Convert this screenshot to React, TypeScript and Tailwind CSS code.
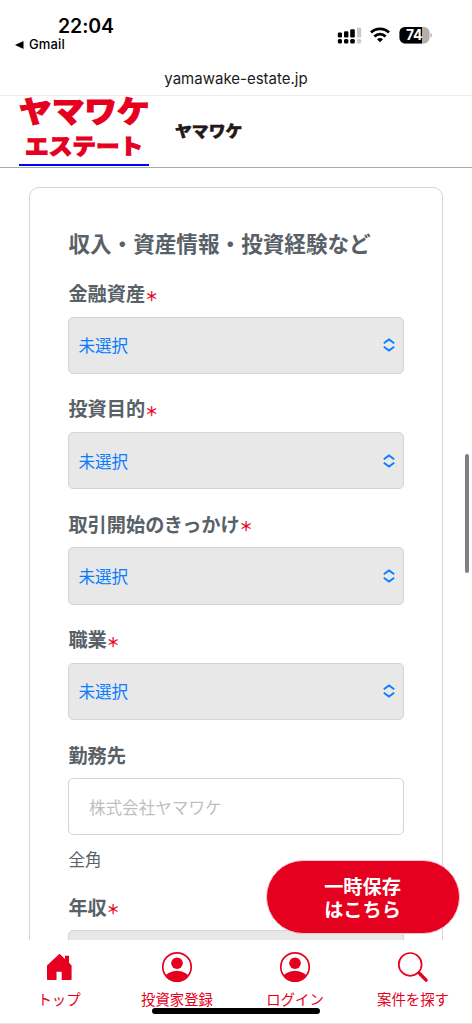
import React from "react";

function StatusBar() {
  return (
    <div className="flex h-[60px] shrink-0 justify-between">
      <div className="pl-[15px] pt-[14px] font-['Inter',sans-serif] text-black">
        <div className="w-[142px] text-center text-[19.5px] font-semibold leading-[24px] tracking-[-0.1px]">22:04</div>
        <div className="flex items-center gap-[5px] text-[13px] font-medium leading-[13px] tracking-[0.15px]">
          <svg width="9" height="8" viewBox="0 0 9 8"><path d="M0 4 8.5 0v8Z" fill="#000" /></svg>
          <span>Gmail</span>
        </div>
      </div>
      <div className="mt-[25px] flex h-[20px] items-center pr-[39px]">
        <svg width="25" height="18" viewBox="0 0 25 18">
          <g fill="#000">
            <rect x="0.8" y="6.5" width="4.2" height="5" rx="1.3" />
            <rect x="7" y="5.3" width="4.4" height="6.2" rx="1.3" />
            <rect x="13.2" y="3.2" width="4.6" height="8.3" rx="1.3" />
            <rect x="0.8" y="13" width="4.2" height="4.6" rx="1.5" />
            <rect x="7" y="13" width="4.4" height="4.6" rx="1.5" />
            <rect x="13.2" y="13" width="4.6" height="4.6" rx="1.5" />
          </g>
          <g fill="#cbcbcb">
            <rect x="20" y="1.5" width="4.2" height="10" rx="1.3" />
            <rect x="20" y="13" width="4.2" height="4.6" rx="1.5" />
          </g>
        </svg>
        <svg className="ml-[8px]" width="20" height="16" viewBox="0 0 20 16" fill="none" stroke="#000" strokeWidth="2.8">
          <path d="M1 5.6C6 .7 14 .7 19 5.6" />
          <path d="M4.4 9.4c3.2-3.1 8-3.1 11.2 0" />
          <path d="M7 12.3c1.8-1.7 4.2-1.7 6 0l-3 3Z" fill="#000" stroke="none" />
        </svg>
        <svg className="ml-[9px]" width="34" height="18" viewBox="0 0 34 18">
          <defs><clipPath id="level"><rect width="23" height="18" /></clipPath></defs>
          <rect x="0.5" y="1" width="30" height="16.4" rx="5.3" fill="#b0b0b0" />
          <rect x="0.5" y="1" width="30" height="16.4" rx="5.3" fill="#000" clipPath="url(#level)" />
          <path d="M31.4 7c2 .6 2 4 0 4.6Z" fill="#b0b0b0" />
          <text x="15" y="14.2" textAnchor="middle" fontSize="14" fontWeight="700" letterSpacing="-0.4" fill="#fff" className="font-['Inter',sans-serif]">74</text>
        </svg>
      </div>
    </div>
  );
}

function SiteHeader() {
  return (
    <header className="flex h-[72px] shrink-0 items-start border-b border-[#a9a9a9] bg-white pl-[19px] font-['Noto_Sans_CJK_JP',sans-serif]">
      <div className="h-[69.5px] w-[130px] border-b-[2.5px] border-[#0000ff]">
        <svg className="overflow-visible" width="130" height="67" viewBox="0 0 130 67" fill="#e60020" stroke="#e60020" strokeWidth="1" fontWeight="900">
          <text transform="translate(0 26.3) scale(1.09 1)" fontSize="30">ヤマワケ</text>
          <text transform="translate(6 57.5) scale(1.1 1)" fontSize="21.5">エステート</text>
        </svg>
      </div>
      <svg className="ml-[26px] mt-[24px] overflow-visible" width="70" height="24" viewBox="0 0 70 24" fill="#231815" stroke="#231815" strokeWidth="0.5" fontWeight="900">
        <text transform="translate(0 16.5) scale(1.08 1)" fontSize="15.6">ヤマワケ</text>
      </svg>
    </header>
  );
}

function Label({ text, required = true }: { text: string; required?: boolean }) {
  return (
    <div className="mb-[9.5px] flex h-[27px] items-center text-[19.2px] font-bold leading-[27px] text-[#596168]">
      <span>{text}</span>
      {required && (
        <span className="pt-[3px] text-[12.8px] font-normal text-[#e60020] [-webkit-text-stroke:0.35px_#e60020]">＊</span>
      )}
    </div>
  );
}

function SelectBox() {
  return (
    <div className="flex h-[57.4px] items-center justify-between rounded-[5px] border border-[#d4d4d4] bg-[#e8e8e8] pl-[9px] pr-[8px] text-[16.6px] text-[#0a7cff]">
      <span className="pt-[1px]">未選択</span>
      <svg width="12" height="14" viewBox="0 0 12 14" fill="none" stroke="#0a7cff" strokeWidth="1.8">
        <path d="M.8 5.2 6 1.4l5.2 3.8M.8 8.8 6 12.6l5.2-3.8" />
      </svg>
    </div>
  );
}

function SelectField({ label }: { label: string }) {
  return (
    <div className="mb-[21.5px]">
      <Label text={label} />
      <SelectBox />
    </div>
  );
}

function PersonIcon({ id }: { id: string }) {
  return (
    <svg width="32" height="32" viewBox="0 0 32 32">
      <defs><clipPath id={id}><circle cx="16" cy="16" r="14.5" /></clipPath></defs>
      <circle cx="16" cy="16" r="14.2" fill="none" stroke="#e60020" strokeWidth="1.7" />
      <circle cx="16" cy="12.2" r="5.8" fill="#e60020" />
      <ellipse cx="16" cy="28.5" rx="12.5" ry="8.7" fill="#e60020" clipPath={`url(#${id})`} />
    </svg>
  );
}

function HomeIcon() {
  return (
    <svg width="32" height="32" viewBox="0 0 32 32">
      <path d="M16.5 2.7 4 14.4V28.2q0 .8.8.8h8.7v-8.3h5.2V29h9.1q.8 0 .8-.8V14.4l-2.6-2.6V4.8h-4v3.2Z" fill="#e60020" />
    </svg>
  );
}

function SearchIcon() {
  return (
    <svg width="32" height="32" viewBox="0 0 32 32" fill="none" stroke="#e60020">
      <circle cx="13.2" cy="13.4" r="11.4" strokeWidth="1.7" />
      <path d="m21 21 2 2" strokeWidth="2" />
      <path d="m22.6 22.5 6.5 6.6" strokeWidth="3.4" strokeLinecap="round" />
    </svg>
  );
}

function BottomNav() {
  const items = [
    { label: "トップ", icon: <HomeIcon /> },
    { label: "投資家登録", icon: <PersonIcon id="register" /> },
    { label: "ログイン", icon: <PersonIcon id="login" /> },
    { label: "案件を探す", icon: <SearchIcon /> },
  ];
  return (
    <nav className="relative grid h-[84px] shrink-0 grid-cols-4 border-b border-[#e8e8e8] bg-white">
      {items.map((item) => (
        <div key={item.label} className="flex flex-col items-center pt-[11px] text-[14.4px] leading-[20px] text-[#e60020]">
          {item.icon}
          <span className="mt-[6px]">{item.label}</span>
        </div>
      ))}
      <div className="absolute bottom-[9px] left-[152px] h-[6px] w-[168px] rounded-full bg-black" />
    </nav>
  );
}

export default function App() {
  return (
    <div className="relative flex h-[1024px] w-[472px] flex-col overflow-hidden bg-white font-['Noto_Sans_CJK_JP',sans-serif]">
      <StatusBar />
      <div className="flex h-[36px] shrink-0 items-center justify-center border-b border-[#ebebeb] pt-[4px] font-['Inter',sans-serif] text-[15px] text-[#1a1a1a]">
        yamawake-estate.jp
      </div>
      <SiteHeader />
      <main className="h-[772px] shrink-0 overflow-hidden px-[29px] pt-[19px]">
        <section className="h-[900px] rounded-[10px] border border-[#d7d7d7] pl-[38.4px] pr-[38.4px] pt-[38.5px]">
          <h2 className="mb-[21.5px] text-[21.6px] font-bold leading-[32px] text-[#596168]">収入・資産情報・投資経験など</h2>
          <SelectField label="金融資産" />
          <SelectField label="投資目的" />
          <SelectField label="取引開始のきっかけ" />
          <SelectField label="職業" />
          <Label text="勤務先" required={false} />
          <div className="flex h-[57.4px] items-center rounded-[5px] border border-[#d4d4d4] bg-white pl-[19.5px] pt-[1px] text-[16.6px] text-[#bfbfbf]">
            株式会社ヤマワケ
          </div>
          <p className="mb-[22.5px] mt-[12px] text-[16.6px] leading-[24px] text-[#596168]">全角</p>
          <SelectField label="年収" />
        </section>
      </main>
      <BottomNav />
      <button className="absolute left-[266px] top-[860px] h-[74px] w-[194px] rounded-full border border-[#f3c6cc] bg-[#e60020] pt-[2px] pr-[1px] text-[19.2px] font-bold leading-[23px] text-white">
        一時保存
        <br />
        はこちら
      </button>
      <div className="absolute left-[465px] top-[454px] h-[119px] w-[4px] rounded-full bg-[#808082]" />
    </div>
  );
}
